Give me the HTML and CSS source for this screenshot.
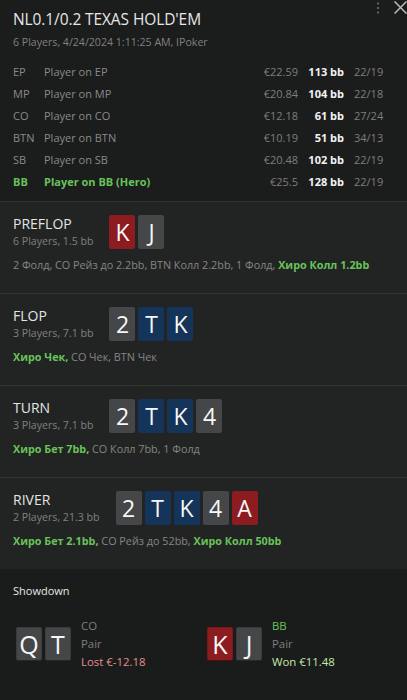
FILE: index.html
```html
<!DOCTYPE html>
<html lang="ru">
<head>
<meta charset="utf-8">
<title>Hand</title>
<link rel="stylesheet" href="styles.css">
</head>
<body>
<div class="panel">
  <header class="head">
    <div class="controls">
      <svg class="dots" width="4" height="12" viewBox="0 0 4 12"><circle cx="2" cy="1.5" r="1" fill="#7a7a7a"/><circle cx="2" cy="6" r="1" fill="#7a7a7a"/><circle cx="2" cy="10.5" r="1" fill="#7a7a7a"/></svg>
      <svg class="x-glyph" width="13" height="13" viewBox="0 0 13 13"><path d="M0.5 0.5L12.5 12.5M12.5 0.5L0.5 12.5" stroke="#bcbcbc" stroke-width="1.5" fill="none"/></svg>
    </div>
    <h1 class="title">NL0.1/0.2 TEXAS HOLD'EM</h1>
    <div class="sub">6 Players, 4/24/2024 1:11:25 AM, IPoker</div>
    <div class="players">
      <span class="pos">EP</span><span class="name">Player on EP</span><span class="money">€22.59</span><span class="bb">113 bb</span><span class="ratio">22/19</span>
      <span class="pos">MP</span><span class="name">Player on MP</span><span class="money">€20.84</span><span class="bb">104 bb</span><span class="ratio">22/18</span>
      <span class="pos">CO</span><span class="name">Player on CO</span><span class="money">€12.18</span><span class="bb">61 bb</span><span class="ratio">27/24</span>
      <span class="pos">BTN</span><span class="name">Player on BTN</span><span class="money">€10.19</span><span class="bb">51 bb</span><span class="ratio">34/13</span>
      <span class="pos">SB</span><span class="name">Player on SB</span><span class="money">€20.48</span><span class="bb">102 bb</span><span class="ratio">22/19</span>
      <span class="pos hero">BB</span><span class="name hero">Player on BB (Hero)</span><span class="money">€25.5</span><span class="bb">128 bb</span><span class="ratio">22/19</span>
    </div>
  </header>

  <section class="street">
    <div class="street-top">
      <div class="street-info">
        <div class="street-name">PREFLOP</div>
        <div class="street-sub">6 Players, 1.5 bb</div>
      </div>
      <div class="cards">
        <span class="card red">K</span><span class="card gray">J</span>
      </div>
    </div>
    <div class="actions">2 Фолд, CO Рейз до 2.2bb, BTN Колл 2.2bb, 1 Фолд, <b class="hero">Хиро Колл 1.2bb</b></div>
  </section>

  <section class="street">
    <div class="street-top">
      <div class="street-info">
        <div class="street-name">FLOP</div>
        <div class="street-sub">3 Players, 7.1 bb</div>
      </div>
      <div class="cards">
        <span class="card gray">2</span><span class="card blue">T</span><span class="card blue">K</span>
      </div>
    </div>
    <div class="actions"><b class="hero">Хиро Чек,</b> CO Чек, BTN Чек</div>
  </section>

  <section class="street">
    <div class="street-top">
      <div class="street-info">
        <div class="street-name">TURN</div>
        <div class="street-sub">3 Players, 7.1 bb</div>
      </div>
      <div class="cards">
        <span class="card gray">2</span><span class="card blue">T</span><span class="card blue">K</span><span class="card gray">4</span>
      </div>
    </div>
    <div class="actions"><b class="hero">Хиро Бет 7bb,</b> CO Колл 7bb, 1 Фолд</div>
  </section>

  <section class="street">
    <div class="street-top">
      <div class="street-info">
        <div class="street-name">RIVER</div>
        <div class="street-sub">2 Players, 21.3 bb</div>
      </div>
      <div class="cards">
        <span class="card gray">2</span><span class="card blue">T</span><span class="card blue">K</span><span class="card gray">4</span><span class="card red">A</span>
      </div>
    </div>
    <div class="actions"><b class="hero">Хиро Бет 2.1bb,</b> CO Рейз до 52bb, <b class="hero">Хиро Колл 50bb</b></div>
  </section>

  <section class="showdown">
    <div class="sd-title">Showdown</div>
    <div class="hands">
      <div class="hand">
        <div class="cards">
          <span class="card gray sd">Q</span><span class="card gray sd">T</span>
        </div>
        <div class="hand-info">
          <div class="muted">CO</div>
          <div class="muted">Pair</div>
          <div class="lost">Lost €-12.18</div>
        </div>
      </div>
      <div class="hand">
        <div class="cards">
          <span class="card red sd">K</span><span class="card gray sd">J</span>
        </div>
        <div class="hand-info">
          <div class="hero-plain">BB</div>
          <div class="muted">Pair</div>
          <div class="won">Won €11.48</div>
        </div>
      </div>
    </div>
  </section>
</div>
</body>
</html>
```

FILE: styles.css
```css
* { box-sizing: border-box; }
html, body {
  margin: 0;
  padding: 0;
  height: 700px;
  overflow: hidden;
  background: #1b1c1c;
  font-family: "Open Sans", "Noto Sans", "Liberation Sans", sans-serif;
  color: #8c8c8c;
}
.panel {
  width: 407px;
  height: 700px;
  background: #1b1c1c;
  display: flex;
  flex-direction: column;
}
.head {
  position: relative;
  padding: 8px 24px 9px 13px;
}
.controls {
  position: absolute;
  top: 1px;
  right: 0;
  display: flex;
  align-items: center;
  gap: 14px;
}
.dots { display: block; flex: none; }
.x-glyph { display: block; flex: none; }
.title {
  margin: 0;
  font-size: 15.5px;
  line-height: 22px;
  font-weight: 400;
  color: #e6e6e6;
  letter-spacing: -0.1px;
}
.sub {
  margin-top: 4px;
  font-size: 10.6px;
  line-height: 16px;
  color: #808080;
}
.players {
  margin-top: 10px;
  display: grid;
  grid-template-columns: 31px 1fr 60px 46px 39px;
  grid-auto-rows: 22px;
  align-items: center;
  font-size: 11px;
  color: #8a8a8a;
}
.pos, .name { white-space: nowrap; }
.money { text-align: right; color: #7e7e7e; }
.bb { text-align: right; color: #f2f2f2; font-weight: 700; }
.ratio { padding-left: 10px; color: #7e7e7e; }
.hero { color: #68c35a; font-weight: 700; }

.street {
  border-top: 1px solid #313332;
  background: #222423;
  padding: 13px 13px 20px;
}
.street-top {
  display: flex;
  align-items: center;
  gap: 16px;
}
.street-name {
  font-size: 14px;
  line-height: 18px;
  color: #e4e4e4;
}
.street-sub {
  font-size: 10.6px;
  line-height: 16px;
  color: #808080;
}
.cards {
  display: flex;
  gap: 3px;
}
.card {
  width: 26px;
  height: 34px;
  border-radius: 2px;
  display: flex;
  align-items: center;
  justify-content: center;
  font-size: 23px;
  color: #f7f7f7;
}
.red { background: #8d1c21; }
.gray { background: #454647; }
.blue { background: #15345a; }
.actions {
  margin-top: 8px;
  font-size: 10.8px;
  line-height: 16px;
  color: #858585;
  white-space: nowrap;
}
.actions b { font-weight: 700; }

.showdown {
  flex: 1;
  background: #1a1c1b;
  padding: 12px 13px 20px;
}
.sd-title {
  font-size: 11px;
  line-height: 20px;
  color: #e6e6e6;
}
.hands {
  margin-top: 16px;
  padding-left: 3px;
  display: grid;
  grid-template-columns: 191px 1fr;
}
.hand {
  display: flex;
  align-items: center;
  gap: 10px;
}
.card.sd {
  box-shadow: inset 0 -1px 0 rgba(0,0,0,0.35), inset 0 0 0 1px rgba(0,0,0,0.15);
  font-size: 25px;
}
.hand-info {
  font-size: 11.4px;
  line-height: 18px;
}
.muted { color: #7e7e7e; }
.lost { color: #e38e8e; }
.won { color: #c4eaa9; }
.hero-plain { color: #68c35a; }
```
